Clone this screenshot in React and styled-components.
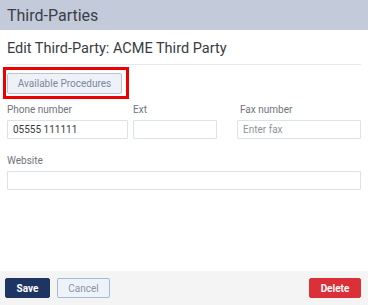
import React from "react";
import styled, { createGlobalStyle } from "styled-components";

const Global = createGlobalStyle`
  html, body { margin: 0; padding: 0; background: #fff; }
  body { font-family: Roboto, "Liberation Sans", Arial, sans-serif; }
  * { box-sizing: border-box; }
`;

const Page = styled.div`
  width: 368px;
  height: 305px;
  display: flex;
  flex-direction: column;
  background: #fff;
  overflow: hidden;
`;

const TopBar = styled.div`
  height: 30px;
  background: #c3cad9;
  display: flex;
  align-items: center;
  padding: 1px 7px 0;
  font-size: 16px;
  color: #3a3f48;
`;

const Body = styled.div`
  flex: 1;
  padding: 0 7px;
  display: flex;
  flex-direction: column;
`;

const Title = styled.div`
  font-size: 14.5px;
  color: #383c44;
  height: 35px;
  display: flex;
  align-items: center;
  padding-top: 3px;
  border-bottom: 1px solid #e6e9ee;
`;

const Highlight = styled.div`
  align-self: flex-start;
  margin: 2px 0 0 -4px;
  border: 3px solid #ee0000;
  padding: 2px 4px 2px 1px;
`;

const GhostButton = styled.button`
  font-family: inherit;
  font-size: 10px;
  color: #7b889b;
  background: #eef2f8;
  border: 1px solid #b9c5d5;
  border-radius: 2px;
  height: 21px;
  width: 115px;
  padding: 0;
`;

const Row = styled.div`
  display: grid;
  grid-template-columns: ${(p) => p.$cols};
  margin-top: ${(p) => p.$top || "0px"};
`;

const Field = styled.div`
  display: flex;
  flex-direction: column;
`;

const Label = styled.label`
  font-size: 10px;
  color: #6f747c;
  height: 15px;
  line-height: 15px;
  margin-bottom: 3px;
  padding-left: ${(p) => p.$indent || "0px"};
`;

const Input = styled.input`
  font-family: inherit;
  font-size: 10px;
  color: #3a3a3a;
  height: 19px;
  width: ${(p) => p.$w || "100%"};
  border: 1px solid #dbe2ea;
  border-radius: 1px;
  padding: 0 5px;
  background: #fff;
  outline: none;
  &::placeholder { color: #8e949c; }
`;

const Footer = styled.div`
  height: 34px;
  background: #f4f4f4;
  display: flex;
  align-items: center;
  padding: 0 7px 0 5px;
  gap: 7px;
`;

const Btn = styled.button`
  font-family: inherit;
  font-size: 10px;
  font-weight: ${(p) => (p.$variant === "cancel" ? 400 : 700)};
  height: 20px;
  width: ${(p) => p.$w};
  padding: 0;
  border-radius: 2px;
  margin-left: ${(p) => (p.$push ? "auto" : "0")};
  color: ${(p) => (p.$variant === "cancel" ? "#8a95a6" : "#fff")};
  background: ${(p) =>
    p.$variant === "save" ? "#1e3563" : p.$variant === "delete" ? "#dc3038" : "#eef3fa"};
  border: 1px solid
    ${(p) =>
      p.$variant === "save" ? "#1e3563" : p.$variant === "delete" ? "#dc3038" : "#a9b8cc"};
`;

export default function App() {
  return (
    <Page>
      <Global />
      <TopBar>Third-Parties</TopBar>
      <Body>
        <Title>Edit Third-Party: ACME Third Party</Title>
        <Highlight>
          <GhostButton>Available Procedures</GhostButton>
        </Highlight>
        <Row $cols="126px 104px 1fr" $top="3px">
          <Field>
            <Label>Phone number</Label>
            <Input $w="121px" defaultValue="05555 111111" />
          </Field>
          <Field>
            <Label>Ext</Label>
            <Input $w="84px" />
          </Field>
          <Field>
            <Label $indent="3px">Fax number</Label>
            <Input placeholder="Enter fax" />
          </Field>
        </Row>
        <Row $cols="1fr" $top="14px">
          <Field>
            <Label>Website</Label>
            <Input />
          </Field>
        </Row>
      </Body>
      <Footer>
        <Btn $variant="save" $w="45px">Save</Btn>
        <Btn $variant="cancel" $w="53px">Cancel</Btn>
        <Btn $variant="delete" $w="52px" $push>Delete</Btn>
      </Footer>
    </Page>
  );
}
